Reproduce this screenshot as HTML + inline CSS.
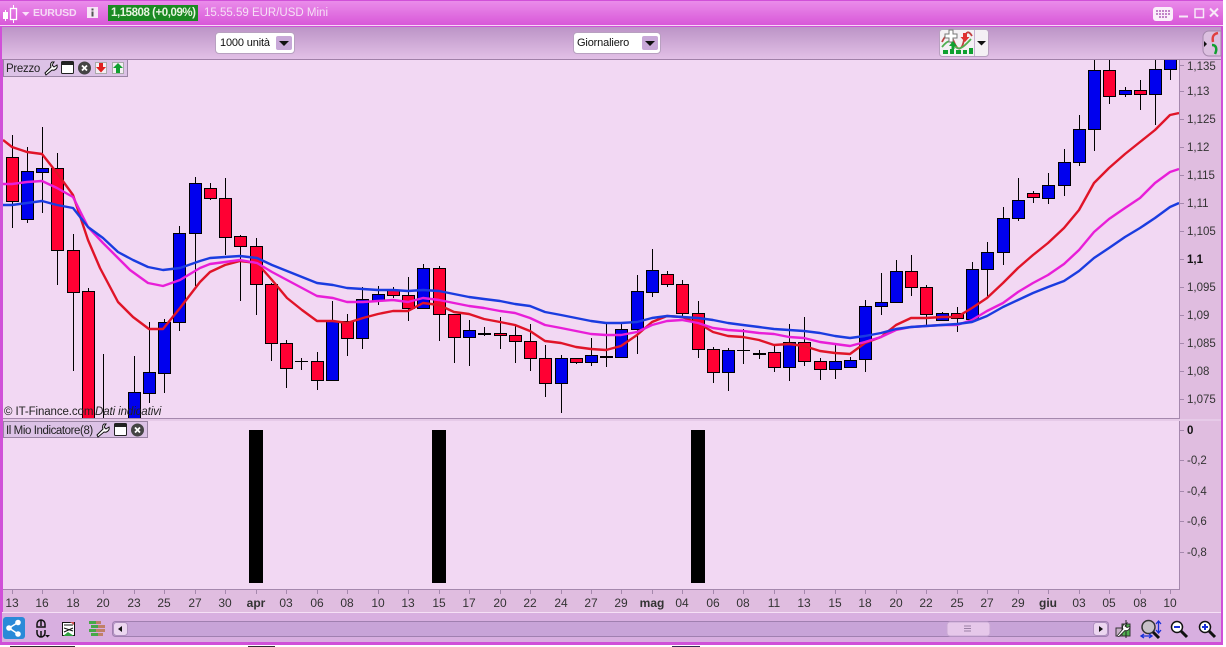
<!DOCTYPE html>
<html><head><meta charset="utf-8"><style>
html,body{margin:0;padding:0;background:#fff}
#w{position:relative;width:1226px;height:647px;overflow:hidden;background:#fff;font-family:"Liberation Sans",sans-serif}
.a{position:absolute}
.t{position:absolute;white-space:nowrap;line-height:14px;font-size:12px}
#x span{position:absolute;top:596px;width:40px;text-align:center;font-size:12px;line-height:14px;color:#333}
#y span{position:absolute;left:1187px;margin-top:1px;font-size:11.5px;line-height:14px;color:#333;white-space:nowrap}
.combo{position:absolute;top:32px;height:20px;background:#fff;border:1px solid #b8a0c0;border-radius:4px;font-size:11px;letter-spacing:-.15px;line-height:20px;color:#111;padding-left:4px;box-sizing:content-box}
.combo i{position:absolute;right:2px;top:3px;width:16px;height:14px;background:#c8a8d8;border-radius:2px}
.combo i:after{content:"";position:absolute;left:3px;top:5px;border:5px solid transparent;border-top:5px solid #111;border-bottom:0}
</style></head><body><div id="w">
<div class="a" style="left:0;top:0;width:1223px;height:645px;background:#d050d8"></div>
<div class="a" style="left:0;top:1px;width:1223px;height:24px;background:linear-gradient(#ea8cea,#d858d8)"></div>
<div class="a" style="left:0;top:25px;width:1223px;height:1px;background:#f6d8f6"></div>
<div class="a" style="left:2px;top:27px;width:1219px;height:32px;background:linear-gradient(#bc94c6,#e2c0e6)"></div>
<div class="a" style="left:2px;top:59px;width:1219px;height:1px;background:#a080a8"></div>
<div class="a" style="left:3px;top:60px;width:1177px;height:530px;background:#f2d8f3"></div>
<div class="a" style="left:1180px;top:60px;width:41px;height:530px;background:#e0bde0"></div>
<div class="a" style="left:1179px;top:60px;width:1px;height:530px;background:#a588ad"></div>
<div class="a" style="left:3px;top:418px;width:1177px;height:1px;background:#a588ad"></div>
<div class="a" style="left:3px;top:419px;width:1218px;height:2px;background:#e6cae8"></div>
<div class="a" style="left:3px;top:590px;width:1218px;height:22px;background:#e0bde0"></div>
<div class="a" style="left:3px;top:589px;width:1177px;height:1px;background:#a588ad"></div>
<div class="a" style="left:2px;top:612px;width:1219px;height:1px;background:#f6e0f6"></div>
<div class="a" style="left:2px;top:613px;width:1219px;height:29px;background:#d8afe0"></div>
<div class="a" style="left:10px;top:646px;width:65px;height:1px;background:#302830"></div>
<div class="a" style="left:248px;top:646px;width:27px;height:1px;background:#302830"></div>
<div class="a" style="left:672px;top:646px;width:28px;height:1px;background:#302850"></div>
<svg class="a" style="left:0;top:0" width="1226" height="647" viewBox="0 0 1226 647">
<defs><clipPath id="c"><rect x="3" y="60" width="1176" height="358"/></clipPath></defs>
<g clip-path="url(#c)">
<path fill="none" stroke="#000" d="M12.5 135V228M27.5 147V223M42.5 127V213M57.5 153V285M73.5 234V371M88.5 288V418M103.5 354V418M134.5 356V418M149.5 322V403M164.5 319V393M179.5 226V331M195.5 177V286M210.5 183V200M225.5 178V255M240.5 235V301M256.5 238V315M271.5 283V361M286.5 340V388M301.5 358V370M317.5 352V390M332.5 301V380M347.5 314V356M362.5 287V349M378.5 286V305M393.5 287V298M408.5 277V321M423.5 264V308M439.5 266V341M454.5 314V363M469.5 320V366M484.5 327V336M500.5 317V349M515.5 326V363M530.5 324V371M545.5 345V397M561.5 355V413M576.5 358V364M591.5 338V366M606.5 323V367M621.5 323V358M637.5 275V354M652.5 249V297M667.5 271V287M682.5 280V318M698.5 301V358M713.5 347V383M728.5 348V391M743.5 329V364M759.5 350V359M774.5 346V372M789.5 324V381M804.5 317V366M820.5 358V380M835.5 345V379M850.5 357V368M865.5 300V372M881.5 273V315M896.5 260V303M911.5 255V296M926.5 285V325M942.5 312V320M957.5 307V332M972.5 262V320M987.5 242V298M1003.5 207V265M1018.5 178V221M1033.5 191V203M1048.5 173V204M1064.5 149V196M1079.5 115V166M1094.5 58V151M1109.5 58V104M1125.5 87V97M1140.5 80V110M1155.5 58V125M1170.5 58V80M295 361.5H308M478 333.5H491M737 350.5H750M753 353.5H766"/>
<path fill="none" stroke="#000" stroke-width="2" d="M478 334H491M753 354H766"/>
<path fill="#ff0033" stroke="#000" d="M6.5 157.5h12v44h-12zM51.5 168.5h12v82h-12zM67.5 250.5h12v42h-12zM82.5 291.5h12v127h-12zM204.5 188.5h12v10h-12zM219.5 198.5h12v39h-12zM234.5 236.5h12v10h-12zM250.5 246.5h12v38h-12zM265.5 284.5h12v59h-12zM280.5 343.5h12v25h-12zM311.5 361.5h12v19h-12zM341.5 321.5h12v17h-12zM387.5 290.5h12v5h-12zM402.5 295.5h12v13h-12zM433.5 268.5h12v46h-12zM448.5 314.5h12v23h-12zM494.5 333.5h12v2h-12zM509.5 335.5h12v6h-12zM524.5 341.5h12v17h-12zM539.5 358.5h12v25h-12zM570.5 358.5h12v4h-12zM600.5 356.5h12v1h-12zM661.5 274.5h12v10h-12zM676.5 284.5h12v29h-12zM692.5 313.5h12v36h-12zM707.5 349.5h12v23h-12zM768.5 352.5h12v15h-12zM798.5 342.5h12v19h-12zM814.5 361.5h12v8h-12zM905.5 271.5h12v16h-12zM920.5 287.5h12v27h-12zM951.5 313.5h12v5h-12zM1027.5 193.5h12v4h-12zM1103.5 70.5h12v26h-12zM1134.5 90.5h12v4h-12z"/>
<path fill="#0000ee" stroke="#000" d="M21.5 171.5h12v48h-12zM36.5 168.5h12v4h-12zM128.5 392.5h12v26h-12zM143.5 372.5h12v21h-12zM158.5 322.5h12v51h-12zM173.5 233.5h12v89h-12zM189.5 183.5h12v50h-12zM326.5 321.5h12v59h-12zM356.5 299.5h12v39h-12zM372.5 294.5h12v6h-12zM417.5 268.5h12v40h-12zM463.5 330.5h12v7h-12zM555.5 358.5h12v25h-12zM585.5 355.5h12v7h-12zM615.5 329.5h12v28h-12zM631.5 291.5h12v38h-12zM646.5 270.5h12v22h-12zM722.5 350.5h12v22h-12zM783.5 342.5h12v25h-12zM829.5 361.5h12v8h-12zM844.5 360.5h12v7h-12zM859.5 306.5h12v53h-12zM875.5 302.5h12v4h-12zM890.5 271.5h12v31h-12zM936.5 313.5h12v7h-12zM966.5 269.5h12v50h-12zM981.5 252.5h12v17h-12zM997.5 218.5h12v34h-12zM1012.5 200.5h12v18h-12zM1042.5 185.5h12v13h-12zM1058.5 162.5h12v23h-12zM1073.5 129.5h12v33h-12zM1088.5 70.5h12v59h-12zM1119.5 90.5h12v4h-12zM1149.5 69.5h12v25h-12zM1164.5 58.5h12v11h-12z"/>
<g fill="none" stroke-width="2.4" stroke-linejoin="round">
<polyline stroke="#e01428" points="3,140 12,147 27,152 42,154 57,173 73,195 88,240 100,268 118,302 133,317 149,329 163,329 180,308 200,282 210,272 225,265 240,261 257,263 272,280 287,298 302,310 317,321 333,321 347,323 363,318 378,314 393,311 408,311 423,303 439,305 454,312 469,314 484,319 500,322 515,325 530,331 545,341 561,343 576,347 591,349 606,350 621,346 637,335 652,322 667,316 682,317 698,323 713,332 728,336 743,337 759,340 774,345 789,344 804,346 820,351 835,353 850,354 865,343 881,337 896,325 911,318 926,318 942,317 957,317 972,308 987,298 1003,283 1018,268 1033,255 1048,243 1064,228 1079,210 1094,183 1109,168 1125,154 1140,142 1155,130 1170,115 1179,113"/>
<polyline stroke="#e81ed8" points="3,184 12,184 27,182 42,181 57,188 73,197 88,227 103,243 115,255 130,270 148,283 163,286 180,280 200,268 210,264 225,262 240,260 257,263 272,272 287,280 302,288 317,296 333,298 347,302 363,302 378,301 393,300 408,302 423,298 439,300 454,303 469,306 484,308 500,311 515,313 530,318 545,325 561,328 576,331 591,334 606,335 621,335 637,332 652,325 667,321 682,320 698,323 713,328 728,330 743,331 759,333 774,334 789,337 804,338 820,342 835,344 850,346 865,342 881,337 896,330 911,327 926,326 942,325 957,325 972,320 987,311 1003,303 1018,292 1033,283 1048,275 1064,264 1079,250 1094,232 1109,219 1125,208 1140,198 1155,183 1170,172 1179,169"/>
<polyline stroke="#1a3ce0" points="3,205 12,205 27,203 42,201 57,205 73,208 88,227 103,238 118,252 133,260 148,267 163,270 180,268 200,261 210,258 225,257 240,256 257,258 272,265 287,271 302,277 317,283 333,285 347,288 363,289 378,290 393,290 408,291 423,290 439,291 454,294 469,297 484,299 500,301 515,304 530,306 545,312 561,315 576,318 591,321 606,323 621,323 637,322 652,318 667,316 682,317 698,318 713,320 728,323 743,325 759,327 774,329 789,330 804,331 820,333 835,336 850,338 865,336 881,333 896,329 911,327 926,326 942,325 957,324 972,322 987,316 1003,307 1018,300 1033,293 1048,287 1064,281 1079,271 1094,258 1109,248 1125,237 1140,228 1155,218 1170,207 1179,203"/>
</g></g>
<rect x="249" y="430" width="14" height="153" fill="#000"/><rect x="432" y="430" width="14" height="153" fill="#000"/><rect x="691" y="430" width="14" height="153" fill="#000"/>
<path fill="none" stroke="#a588ad" d="M1180 65.5h4M1180 91.5h4M1180 119.5h4M1180 147.5h4M1180 175.5h4M1180 203.5h4M1180 231.5h4M1180 259.5h4M1180 287.5h4M1180 315.5h4M1180 343.5h4M1180 371.5h4M1180 399.5h4M1180 430.5h4M1180 460.5h4M1180 491.5h4M1180 521.5h4M1180 552.5h4"/>
<path fill="none" stroke="#a588ad" d="M12.5 590v4M42.5 590v4M73.5 590v4M103.5 590v4M134.5 590v4M164.5 590v4M195.5 590v4M225.5 590v4M256.5 590v4M286.5 590v4M317.5 590v4M347.5 590v4M378.5 590v4M408.5 590v4M439.5 590v4M469.5 590v4M500.5 590v4M530.5 590v4M561.5 590v4M591.5 590v4M621.5 590v4M652.5 590v4M682.5 590v4M713.5 590v4M743.5 590v4M774.5 590v4M804.5 590v4M835.5 590v4M865.5 590v4M896.5 590v4M926.5 590v4M957.5 590v4M987.5 590v4M1018.5 590v4M1048.5 590v4M1079.5 590v4M1109.5 590v4M1140.5 590v4M1170.5 590v4"/>
<!-- title icons -->
<rect x="3" y="12" width="5" height="7" fill="#fff"/><rect x="5" y="10" width="1" height="11" fill="#fff"/>
<rect x="10.500" y="8.500" width="6" height="11" fill="none" stroke="#fff" stroke-width="1.300"/><path d="M13.500 5v3M13.500 20v3" stroke="#fff"/>
<path d="M22 12h7.500l-3.700 4z" fill="#fbe0fb"/>
<rect x="87" y="7" width="11" height="11" fill="#f8e4f8"/><rect x="91.500" y="8.500" width="2" height="2" fill="#555"/><rect x="91.500" y="11.500" width="2" height="5" fill="#555"/>
<rect x="108" y="5" width="90" height="16" fill="#1a8a22"/>
<rect x="1153" y="7" width="20" height="14" rx="3" fill="#fbeefb"/>
<path d="M1156 11h14M1156 14h14M1159 17h8" stroke="#b060b8" stroke-width="1.500" stroke-dasharray="2 1"/>
<path d="M1179 16.500h9" stroke="#f8e8f8" stroke-width="2"/>
<rect x="1195" y="9" width="8.500" height="8.500" fill="none" stroke="#f8e8f8" stroke-width="1.500"/>
<path d="M1210 8.500l8 8M1218 8.500l-8 8" stroke="#f8e8f8" stroke-width="2"/>
<!-- indicator button -->
<rect x="939.500" y="29.500" width="49" height="27" rx="3" fill="#f4f0f4" stroke="#b8a0c0"/>
<path d="M974.500 30v26" stroke="#c8b0d0"/>
<path d="M942 42c5-10 8-10 12 0s8 8 10-2 5-9 8-4" fill="none" stroke="#c04040" stroke-width="1.800"/>
<path d="M942 47c5-6 8-8 12-2s8 4 17-6" fill="none" stroke="#50b050" stroke-width="1.800"/>
<path d="M945 34h4v-4h4v4h4v4h-4v4h-4v-4h-4z" fill="#fff" stroke="#777"/>
<path d="M963 33h4v4h2.500l-4.500 5-4.500-5h2.500z" fill="#e03030"/><path d="M953 41l4 5h-2.500v3h-3v-3h-2.500z" fill="#10a030"/>
<path d="M943 50h5v4h-5zM950 49h4v5h-4zM956 50h5v4h-5zM963 50h4v4h-4zM969 48h4v6h-4z" fill="#10a030"/>
<path d="M977 41h9l-4.500 4.500z" fill="#111"/>
<!-- right tool -->
<path d="M1221 31h-12a6 6 0 0 0-6 6v13a6 6 0 0 0 6 6h12z" fill="#dcc0e0" stroke="#a588ad"/>
<path d="M1207 44l-3-3v6z" fill="#111"/>
<path d="M1218 33c-5 1-6 4-5 9" fill="none" stroke="#e04040" stroke-width="2.500"/>
<path d="M1212 45c5 0 5 5 3 9" fill="none" stroke="#10a030" stroke-width="2.500"/>
<!-- panel tabs -->
<path d="M3.500 60v16.500h124V60" fill="#dcc2e6" stroke="#9a84a4"/>
<path d="M3.500 421v16.500h144V421" fill="#dcc2e6" stroke="#9a84a4"/><path d="M3 421.500h144" stroke="#9a84a4"/>
<path d="M45 73l6-6a4 4 0 0 1 1-5l2 0-2 3 2 2 3-2a4 4 0 0 1-5 5l-6 5z" fill="#fff" stroke="#111"/>
<rect x="61.500" y="61.500" width="12" height="12" rx="1" fill="#fff" stroke="#222"/><rect x="62" y="62" width="11" height="3" fill="#222"/>
<circle cx="84.500" cy="68" r="6.500" fill="#444"/><path d="M82 65.500l5 5M87 65.500l-5 5" stroke="#fff" stroke-width="1.800"/>
<rect x="95.500" y="62.500" width="11" height="11" fill="#f4eef4" stroke="#aaa"/><path d="M99 63h4v4h3l-5 5.500-5-5.500h3z" fill="#e02020"/>
<rect x="112.500" y="62.500" width="11" height="11" fill="#f4eef4" stroke="#aaa"/><path d="M118 63l5 5h-3v5h-4v-5h-3z" fill="#10a030"/>
<path d="M97 435l6-6a4 4 0 0 1 1-5l2 0-2 3 2 2 3-2a4 4 0 0 1-5 5l-6 5z" fill="#fff" stroke="#111"/>
<rect x="114.500" y="423.500" width="12" height="12" rx="1" fill="#fff" stroke="#222"/><rect x="115" y="424" width="11" height="3" fill="#222"/>
<circle cx="137.500" cy="430" r="6.500" fill="#444"/><path d="M135 427.500l5 5M140 427.500l-5 5" stroke="#fff" stroke-width="1.800"/>
<!-- bottom left icons -->
<rect x="3" y="617" width="22" height="22" rx="3" fill="#2a8ad8"/>
<circle cx="9" cy="628" r="2.800" fill="#fff"/><circle cx="18" cy="622.500" r="2.800" fill="#fff"/><circle cx="18" cy="634" r="2.800" fill="#fff"/><path d="M18 622.500L9 628l9 6" fill="none" stroke="#fff" stroke-width="1.500"/>
<path d="M37 627v-3a4 4 0 0 1 8 0v3zM37 630v3a4 4 0 0 0 8 0v-3M41 620v6M41 631v6" fill="none" stroke="#111" stroke-width="1.500"/>
<path d="M45 635h5l-2.500 2.500z" fill="#111"/>
<rect x="62.500" y="622.500" width="12" height="13" fill="#fff" stroke="#111"/>
<path d="M64 625h9M64 628l9 3M64 632l9-4" stroke="#111"/><path d="M63 636l5-4 6 4z" fill="#30a040"/><path d="M70 622h4v3z" fill="#d05050"/>
<path d="M89 621h7v3h-7zM91 625h7v3h-7zM89 629h7v3h-7zM91 633h7v3h-7z" fill="#48a848"/>
<path d="M96 621h5v3h-5zM98 625h7v3h-7zM96 629h9v3h-9zM98 633h5v3h-5z" fill="#c08068"/>
<!-- scrollbar -->
<rect x="112.500" y="621.500" width="996" height="15" rx="3" fill="#c8a4d8" stroke="#a080b0"/>
<rect x="113.500" y="622.500" width="14" height="13" rx="3" fill="#ecd6f0" stroke="#b090c0"/><path d="M118 629l4-3v6z" fill="#111"/>
<rect x="1093.500" y="622.500" width="14" height="13" rx="3" fill="#ecd6f0" stroke="#b090c0"/><path d="M1103 629l-4-3v6z" fill="#111"/>
<rect x="947" y="622" width="43" height="14" rx="3" fill="#e6c8ea" stroke="#c8a8d4"/><path d="M964 626h7M964 628.500h7M964 631h7" stroke="#9a80a4"/>
<!-- bottom right icons -->
<rect x="1116" y="628" width="7" height="8" fill="#c8b0c8" stroke="#333"/><rect x="1122" y="624" width="8" height="12" fill="#50b050" stroke="#333"/><path d="M1126 620v18" stroke="#222"/>
<path d="M1117 636l6-7a3.500 3.500 0 0 1 2-5l2-1-2 3 2 1.500 3-1a4 4 0 0 1-5 4l-6 6z" fill="#fff" stroke="#222" stroke-width=".8"/>
<circle cx="1148.500" cy="627" r="6.500" fill="#c8c0c8" stroke="#333" stroke-width="1.500"/><path d="M1153 632l6 6" stroke="#111" stroke-width="3"/>
<path d="M1158.500 622v10M1156 624l2.500-3 2.500 3M1156 630l2.500 3 2.500-3M1142 636h9M1144 634l-3 2 3 2M1149 634l3 2-3 2" fill="none" stroke="#1830d8" stroke-width="1.300"/>
<circle cx="1177" cy="627" r="5.500" fill="#fff" stroke="#111" stroke-width="1.500"/><path d="M1174 627h6" stroke="#1830d8" stroke-width="2"/><path d="M1181 631l6 6" stroke="#111" stroke-width="3"/>
<circle cx="1205" cy="627" r="5.500" fill="#fff" stroke="#111" stroke-width="1.500"/><path d="M1202 627h6M1205 624v6" stroke="#1830d8" stroke-width="2"/><path d="M1209 631l6 6" stroke="#111" stroke-width="3"/>
</svg>
<div class="t" style="left:33px;top:6px;color:#f6daf6;font-weight:bold;font-size:10.5px;letter-spacing:-.15px">EURUSD</div>
<div class="t" style="left:111px;top:6px;color:#e8f4e0;font-weight:bold;font-size:11.5px;letter-spacing:-.45px">1,15808 (+0,09%)</div>
<div class="t" style="left:204px;top:6px;color:#f6e0f6;font-size:11.5px">15.55.59 EUR/USD Mini</div>
<div class="combo" style="left:215px;width:74px">1000 unità<i></i></div>
<div class="combo" style="left:573px;width:83px;padding-left:3px">Giornaliero<i></i></div>
<div class="t" style="left:6px;top:62px;color:#222;font-size:11.5px;letter-spacing:-.3px">Prezzo</div>
<div class="t" style="left:6px;top:424px;color:#222;font-size:11.5px;letter-spacing:-.42px">Il Mio Indicatore(8)</div>
<div class="t" style="left:4px;top:405px;color:#222;font-size:11.5px;letter-spacing:-.1px">© IT-Finance.com</div>
<div class="t" style="left:95px;top:405px;color:#222;font-style:italic;font-size:11.5px;letter-spacing:-.1px">Dati indicativi</div>
<div id="y">
<span style="top:59px">1,135</span><span style="top:84px">1,13</span><span style="top:112px">1,125</span><span style="top:140px">1,12</span><span style="top:168px">1,115</span><span style="top:196px">1,11</span><span style="top:224px">1,105</span><span style="top:252px;font-weight:bold;color:#111">1,1</span><span style="top:280px">1,095</span><span style="top:308px">1,09</span><span style="top:336px">1,085</span><span style="top:364px">1,08</span><span style="top:392px">1,075</span>
<span style="top:423px;font-weight:bold;color:#111">0</span><span style="top:453px">-0,2</span><span style="top:484px">-0,4</span><span style="top:514px">-0,6</span><span style="top:545px">-0,8</span>
</div>
<div id="x">
<span style="left:-8px">13</span><span style="left:22px">16</span><span style="left:53px">18</span><span style="left:83px">20</span><span style="left:114px">23</span><span style="left:144px">25</span><span style="left:175px">27</span><span style="left:205px">30</span><span style="left:236px;font-weight:bold">apr</span><span style="left:266px">03</span><span style="left:297px">06</span><span style="left:327px">08</span><span style="left:358px">10</span><span style="left:388px">13</span><span style="left:419px">15</span><span style="left:449px">17</span><span style="left:480px">20</span><span style="left:510px">22</span><span style="left:541px">24</span><span style="left:571px">27</span><span style="left:601px">29</span><span style="left:632px;font-weight:bold">mag</span><span style="left:662px">04</span><span style="left:693px">06</span><span style="left:723px">08</span><span style="left:754px">11</span><span style="left:784px">13</span><span style="left:815px">15</span><span style="left:845px">18</span><span style="left:876px">20</span><span style="left:906px">22</span><span style="left:937px">25</span><span style="left:967px">27</span><span style="left:998px">29</span><span style="left:1028px;font-weight:bold">giu</span><span style="left:1059px">03</span><span style="left:1089px">05</span><span style="left:1120px">08</span><span style="left:1150px">10</span>
</div>
</div></body></html>
